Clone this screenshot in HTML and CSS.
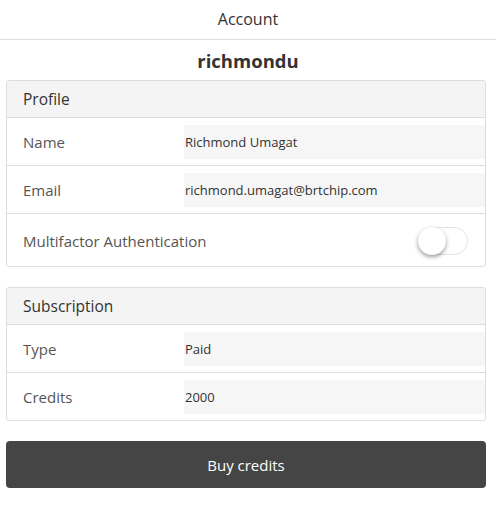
FILE: index.html
```html
<!DOCTYPE html>
<html>
<head>
<meta charset="utf-8">
<link rel="stylesheet" href="styles.css">
</head>
<body>
<header class="topbar">Account</header>
<h1 class="username">richmondu</h1>
<section class="card">
  <div class="card-head">Profile</div>
  <div class="row">
    <span class="label">Name</span>
    <span class="value">Richmond Umagat</span>
  </div>
  <div class="row">
    <span class="label">Email</span>
    <span class="value">richmond.umagat@brtchip.com</span>
  </div>
  <div class="row row-toggle">
    <span class="label">Multifactor Authentication</span>
    <span class="toggle"><span class="knob"></span></span>
  </div>
</section>
<section class="card">
  <div class="card-head">Subscription</div>
  <div class="row">
    <span class="label">Type</span>
    <span class="value">Paid</span>
  </div>
  <div class="row">
    <span class="label">Credits</span>
    <span class="value">2000</span>
  </div>
</section>
<button class="buy">Buy credits</button>
</body>
</html>
```
FILE: styles.css
```css
* { box-sizing: border-box; }
body {
  margin: 0;
  font-family: "Segoe UI", "Open Sans", "Noto Sans", sans-serif;
  color: #333;
  background: #fff;
  width: 496px;
}
.topbar {
  height: 40px;
  border-bottom: 1px solid #ddd;
  display: flex;
  align-items: center;
  justify-content: center;
  font-size: 16px;
  color: #333;
  padding-bottom: 1px;
}
.username {
  margin: 0;
  height: 40px;
  display: flex;
  align-items: center;
  justify-content: center;
  font-size: 18.5px;
  font-weight: 700;
  color: #333;
}
.card {
  margin: 0 10px 0 6px;
  border: 1px solid #ddd;
  border-radius: 3px;
  overflow: hidden;
}
.card + .card { margin-top: 20px; }
.card-head {
  height: 37px;
  background: #f4f4f4;
  border-bottom: 1px solid #ddd;
  padding-left: 16px;
  display: flex;
  align-items: center;
  font-size: 15.5px;
  color: #333;
}
.row {
  display: grid;
  grid-template-columns: 177px 1fr;
  align-items: center;
  height: 48px;
  border-bottom: 1px solid #ddd;
  padding-top: 1px;
}
.row:last-child { border-bottom: 0; height: 47px; }
.row-toggle { height: 52px; }
.row-toggle:last-child { height: 52px; }
.label {
  padding-left: 16px;
  font-size: 15px;
  color: #555;
}
.value {
  height: 34px;
  background: #f6f6f6;
  display: flex;
  align-items: center;
  padding-left: 1px;
  font-size: 13px;
  color: #333;
}
.row-toggle {
  grid-template-columns: 1fr auto;
}
.toggle {
  width: 50px;
  height: 28px;
  margin-right: 17px;
  border-radius: 14px;
  border: 1px solid #e4e4e4;
  background: #fff;
  position: relative;
}
.knob {
  position: absolute;
  left: -1px;
  top: -1px;
  width: 28px;
  height: 28px;
  border-radius: 50%;
  background: #fff;
  box-shadow: 0 2px 4px rgba(0,0,0,0.4);
}
.buy {
  display: block;
  margin: 20px 10px 0 6px;
  width: 480px;
  height: 47px;
  border: 0;
  border-radius: 4px;
  background: #454545;
  color: #fff;
  font-family: inherit;
  font-size: 15px;
}
```
